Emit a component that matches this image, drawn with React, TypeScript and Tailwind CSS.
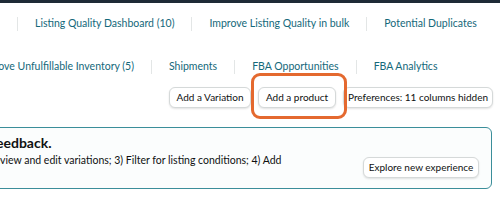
import React from 'react'

const Sep = () => <span className="w-px h-[14px] bg-[#e3e6e6]" />

const Btn = ({ children, className = '' }: { children: React.ReactNode; className?: string }) => (
  <button
    className={`h-[21px] rounded-[6px] border border-[#d5d9d9] bg-white text-[10px] text-[#0f1111] shadow-[0_1px_2px_rgba(15,17,17,0.12)] whitespace-nowrap flex items-center justify-center ${className}`}
  >
    {children}
  </button>
)

export default function App() {
  return (
    <div className="w-[500px] h-[205px] overflow-hidden bg-white font-['Lato','Liberation_Sans',sans-serif] text-[#14687a]">
      <div className="h-[3px] bg-[#1e2a36]" />

      <div className="flex items-center h-[42px] text-[10.5px] whitespace-nowrap">
        <div className="ml-[17px] flex items-center gap-[17px]">
          <Sep />
          <span>Listing Quality Dashboard (10)</span>
          <Sep />
          <span>Improve Listing Quality in bulk</span>
          <Sep />
          <span>Potential Duplicates</span>
        </div>
      </div>

      <div className="flex items-center h-[44px] text-[10.5px] whitespace-nowrap">
        <div className="flex items-center gap-[17px]">
          <div className="w-[134px] flex justify-end">
            <span>Remove Unfulfillable Inventory (5)</span>
          </div>
          <Sep />
          <span>Shipments</span>
          <Sep />
          <span>FBA Opportunities</span>
          <Sep />
          <span>FBA Analytics</span>
        </div>
      </div>

      <div className="flex justify-end items-center gap-[7px] pr-[7px] -mt-[2px]">
        <Btn className="w-[82px] text-[10.5px]">Add a Variation</Btn>
        <div className="relative">
          <Btn className="w-[78px]">Add a product</Btn>
          <div className="absolute -left-[7px] -right-[11px] -top-[14px] -bottom-[11px] border-[3px] border-[#e4692f] rounded-[9px]" />
        </div>
        <Btn className="w-[150px]">Preferences: 11 columns hidden</Btn>
      </div>

      <div className="mt-[19px] mr-[8px] -ml-[10px] h-[62px] rounded-[6px] border-[1.5px] border-[#3b8e9a] bg-[#fbfdfd] flex items-start justify-between pt-[5.5px] pr-[12px]">
        <div className="whitespace-nowrap text-[#0f1111]">
          <div className="w-[60.5px] flex justify-end text-[14px] font-bold leading-[18px]">
            <span>Share your feedback.</span>
          </div>
          <div className="w-[290.5px] flex justify-end text-[10.5px] leading-[16px]">
            <span>1) Edit in bulk; 2) Review and edit variations; 3) Filter for listing conditions; 4) Add</span>
          </div>
        </div>
        <div className="mt-[23px]">
          <Btn className="w-[116px]">Explore new experience</Btn>
        </div>
      </div>
    </div>
  )
}
